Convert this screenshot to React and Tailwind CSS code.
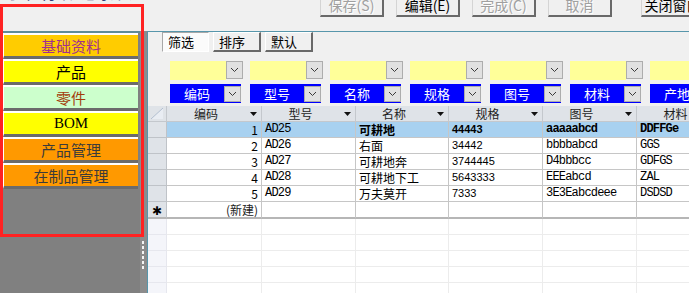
import React from 'react'

const cjk = "font-['Noto_Sans_CJK_SC',sans-serif]"
const mono = "font-['Liberation_Mono','Noto_Sans_CJK_SC',monospace]"

const navItems = [
  { label: '基础资料', bg: 'bg-[#ffcc00]', fg: 'text-[#a0308f]' },
  { label: '产品', bg: 'bg-[#ffff00]', fg: 'text-black' },
  { label: '零件', bg: 'bg-[#ccffcc]', fg: 'text-[#a33c0b]' },
  { label: 'BOM', bg: 'bg-[#ffff00]', fg: 'text-black' },
  { label: '产品管理', bg: 'bg-[#ff9900]', fg: 'text-[#3b3b3b]' },
  { label: '在制品管理', bg: 'bg-[#ff9900]', fg: 'text-[#3b3b3b]' },
]

const toolButtons = [
  { label: '保存(S)', disabled: true },
  { label: '编辑(E)', disabled: false },
  { label: '完成(C)', disabled: true },
  { label: '取消', disabled: true },
]

const fields = ['编码', '型号', '名称', '规格', '图号', '材料', '产地']

const columns = [
  { title: '编码', w: 'w-[95px]' },
  { title: '型号', w: 'w-[94px]' },
  { title: '名称', w: 'w-[93px]' },
  { title: '规格', w: 'w-[94px]' },
  { title: '图号', w: 'w-[94px]' },
  { title: '材料', w: 'w-[94px]' },
]

const rows = [
  ['1', 'AD25', '可耕地', '44443', 'aaaaabcd', 'DDFFGe'],
  ['2', 'AD26', '右面', '34442', 'bbbbabcd', 'GGS'],
  ['3', 'AD27', '可耕地奔', '3744445', 'D4bbbcc', 'GDFGS'],
  ['4', 'AD28', '可耕地下工', '5643333', 'EEEabcd', 'ZAL'],
  ['5', 'AD29', '万夫莫开', '7333', '3E3Eabcdeee', 'DSDSD'],
]

function Chevron() {
  return (
    <svg width="9" height="6" viewBox="0 0 9 6" fill="none" stroke="#3a3a3a" strokeWidth="1">
      <path d="M1 1l3.5 3.5L8 1" />
    </svg>
  )
}

function DropButton({ className }) {
  return (
    <div className={`w-[17px] flex items-center justify-center bg-[#e1e1e1] border border-[#adadad] ${className}`}>
      <Chevron />
    </div>
  )
}

function SortArrow() {
  return (
    <svg width="7" height="4" viewBox="0 0 7 4">
      <path d="M0 0h7L3.5 4z" fill="#111" />
    </svg>
  )
}

function DataRow({ cells, selected }) {
  const cellBg = selected ? 'bg-[#a8d1f0]' : 'bg-white'
  return (
    <div className="flex h-[16px] shrink-0">
      <div className="w-[19px] shrink-0 bg-[#dfe3e8] border-r border-b border-[#bfc3c8]" />
      {columns.map((col, i) => {
        let text = 'text-[12px] ' + cjk
        if (i === 1 || i === 4 || i === 5) text = `text-[12px] tracking-[-0.8px] ${mono}`
        if (i === 3) text = "text-[11px] font-['Liberation_Sans',sans-serif]"
        const weight = selected && i > 1 ? 'font-bold' : ''
        return (
          <div
            key={i}
            className={`${col.w} shrink-0 ${cellBg} border-r border-b border-[#c6c6c6] overflow-hidden whitespace-nowrap leading-[15px] text-black ${weight} ${text} ${i === 0 ? 'text-right pr-[3px]' : 'pl-[3px]'}`}
          >
            {cells[i]}
          </div>
        )
      })}
    </div>
  )
}

export default function App() {
  return (
    <div className={`relative w-[689px] h-[293px] overflow-hidden bg-[#f0f0f0] flex flex-col ${cjk}`}>
      {/* top strip: title + toolbar */}
      <div className="flex h-[31px] shrink-0">
        <div className="w-[320px] shrink-0 overflow-hidden">
          <div className="-mt-[17px] pl-[2px] text-[17px] leading-[18px] text-[#2f3a78] tracking-[1px] whitespace-nowrap">
            订单明细 记录表
          </div>
        </div>
        <div className="flex gap-[12px]">
          {toolButtons.map((b) => (
            <div
              key={b.label}
              className={`w-[64px] h-[25px] -mt-[8px] bg-[#f0f0f0] border-l border-t border-[#d4d4d4] border-r-2 border-b-2 border-r-[#696969] border-b-[#696969] text-center text-[14px] leading-[14px] pt-[5px] whitespace-nowrap ${
                b.disabled ? 'text-[#a0a0a0] [text-shadow:1px_1px_0_#ffffff]' : 'text-black'
              }`}
            >
              {b.label}
            </div>
          ))}
          <div className="w-[64px] h-[25px] -mt-[8px] ml-[17px] shrink-0 bg-[#f0f0f0] border-l border-t border-[#d4d4d4] border-r-2 border-b-2 border-r-[#696969] border-b-[#696969] text-center text-[14px] leading-[14px] pt-[5px] whitespace-nowrap text-black">
            关闭窗口
          </div>
        </div>
      </div>

      <div className="flex flex-1 min-h-0">
        {/* left navigation */}
        <div className="w-[140px] shrink-0 bg-[#808080] border-t-2 border-[#5f8c98] flex flex-col">
          {navItems.map((item) => (
            <div
              key={item.label}
              className={`ml-[3px] mr-[2px] h-[26px] shrink-0 border-t-2 border-l border-white border-b-[3px] border-b-[#6b6b6b] ${item.bg} ${item.fg} text-center text-[15px] leading-[21px] ${
                item.label === 'BOM' ? "font-['Liberation_Serif',serif]" : ''
              }`}
            >
              {item.label}
            </div>
          ))}
        </div>

        {/* splitter */}
        <div className="w-[7px] shrink-0 bg-[#8c8c8c] pl-[2px] pt-[210px] flex flex-col gap-[2px]">
          {[0, 1, 2, 3, 4, 5].map((i) => (
            <div key={i} className="w-[2px] h-[3px] bg-[#f4f4f4]" />
          ))}
        </div>

        {/* main content */}
        <div className="flex-1 min-w-0 border-l border-t border-[#5796ab] flex flex-col overflow-hidden">
          <div className="flex gap-[4px] pl-[14px] h-[20px] shrink-0">
            <div className="w-[47px] bg-[#fbfbfb] border border-[#a8a8a8] border-r-white border-b-white pl-[5px] text-[13px] leading-[18px] text-black">
              筛选
            </div>
            {['排序', '默认'].map((t) => (
              <div
                key={t}
                className="w-[48px] bg-[#f0f0f0] border-l border-t border-white border-r-2 border-b-2 border-r-[#696969] border-b-[#696969] pl-[5px] text-[13px] leading-[17px] text-black"
              >
                {t}
              </div>
            ))}
          </div>

          <div className="flex gap-[7px] pl-[22px] mt-[9px] h-[19px] shrink-0">
            {fields.map((f) => (
              <div key={f} className="w-[73px] shrink-0 flex">
                <div className="flex-1 bg-[#ffff99]" />
                <DropButton className="h-[18px]" />
              </div>
            ))}
          </div>

          <div className="flex gap-[9px] pl-[22px] mt-[4px] h-[19px] shrink-0">
            {fields.map((f) => (
              <div key={f} className="w-[71px] shrink-0 flex bg-[#0000ff]">
                <div className="flex-1 text-center text-white text-[13px] leading-[19px]">{f}</div>
                <DropButton className="h-[16px] mt-[2px]" />
              </div>
            ))}
          </div>

          {/* data grid */}
          <div className="mt-[3px] flex flex-col">
            <div className="flex h-[16px] shrink-0 bg-[#dfe3e8]">
              <div className="w-[19px] shrink-0 border-r border-b border-[#c4c8cd] flex items-end justify-start">
                <svg width="18" height="15" viewBox="0 0 18 15">
                  <path d="M3 13L15 2V13z" fill="#e9edf3" />
                  <path d="M3 13L15 2" stroke="#b3bfd0" strokeWidth="1" />
                </svg>
              </div>
              {columns.map((col) => (
                <div
                  key={col.title}
                  className={`${col.w} shrink-0 flex items-center border-r border-b border-[#c4c8cd] text-[12px] leading-[15px] text-[#1e1e1e]`}
                >
                  <div className="flex-1 text-center">{col.title}</div>
                  <div className="w-[16px] flex justify-center">
                    <SortArrow />
                  </div>
                </div>
              ))}
            </div>

            {rows.map((r, i) => (
              <DataRow key={i} cells={r} selected={i === 0} />
            ))}

            <div className="flex h-[17px] shrink-0">
              <div className="w-[19px] shrink-0 bg-[#dfe3e8] border-r border-[#bfc3c8] border-b-2 border-b-[#b6b6b6] text-center text-[12px] leading-[15px] text-black">
                ✱
              </div>
              {columns.map((col, i) => (
                <div
                  key={col.title}
                  className={`${col.w} shrink-0 bg-white border-r border-[#c6c6c6] border-b-2 border-b-[#b6b6b6] text-[12px] leading-[15px] text-[#222] ${
                    i === 0 ? 'text-right pr-[3px]' : ''
                  }`}
                >
                  {i === 0 ? '(新建)' : ''}
                </div>
              ))}
            </div>

            {[0, 1, 2, 3, 4].map((k) => (
              <div key={k} className="flex h-[16px] shrink-0">
                <div className="w-[19px] shrink-0 bg-[#f4f5fa] border-r border-b border-[#e6e7ee]" />
                {columns.map((col) => (
                  <div key={col.title} className={`${col.w} shrink-0 bg-white border-r border-b border-[#ececec]`} />
                ))}
              </div>
            ))}
          </div>
        </div>
      </div>

      {/* annotation frame drawn over the navigation panel */}
      <div className="absolute left-0 top-[4px] w-[144px] h-[233px] border-[3px] border-[#ff2222] pointer-events-none" />
    </div>
  )
}
